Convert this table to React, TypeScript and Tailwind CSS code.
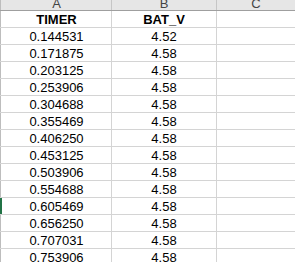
const ROWS: [string, string][] = [
  ["0.144531", "4.52"],
  ["0.171875", "4.58"],
  ["0.203125", "4.58"],
  ["0.253906", "4.58"],
  ["0.304688", "4.58"],
  ["0.355469", "4.58"],
  ["0.406250", "4.58"],
  ["0.453125", "4.58"],
  ["0.503906", "4.58"],
  ["0.554688", "4.58"],
  ["0.605469", "4.58"],
  ["0.656250", "4.58"],
  ["0.707031", "4.58"],
  ["0.753906", "4.58"],
];

const SELECTED = 10;

function Row({ a, b, bold, selected }: { a: string; b: string; bold?: boolean; selected?: boolean }) {
  return (
    <div className="flex h-[17px] border-b border-[#d4d4d4]">
      {/* row header edge */}
      <div className={selected ? "w-[2px] bg-[#217346]" : "w-[2px] border-l border-[#bdbdbd]"} />
      <div className={`w-[110px] border-r border-[#d4d4d4] flex items-end justify-center leading-[15px] ${bold ? "font-bold" : ""}`}>
        {a}
      </div>
      <div className={`w-[105px] border-r border-[#d4d4d4] flex items-end justify-center leading-[15px] ${bold ? "font-bold" : ""}`}>
        {b}
      </div>
      <div className="flex-1" />
    </div>
  );
}

export default function App() {
  return (
    <div className="w-[295px] h-[262px] overflow-hidden bg-white text-[13px] text-black font-['Liberation_Sans',Arial,sans-serif]">
      {/* column headers, top half cut off */}
      <div className="flex h-[11px] bg-[#e6e6e6] border-b border-[#9f9f9f] text-[#444] overflow-hidden">
        <div className="w-[2px] border-l border-[#bdbdbd]" />
        <div className="w-[110px] border-r border-[#c6c6c6] flex items-end justify-center leading-[13px]">A</div>
        <div className="w-[105px] border-r border-[#c6c6c6] flex items-end justify-center leading-[13px]">B</div>
        <div className="flex-1 flex items-end justify-center leading-[13px]">C</div>
      </div>
      <Row a="TIMER" b="BAT_V" bold />
      {ROWS.map(([a, b], i) => (
        <Row key={i} a={a} b={b} selected={i === SELECTED} />
      ))}
    </div>
  );
}
